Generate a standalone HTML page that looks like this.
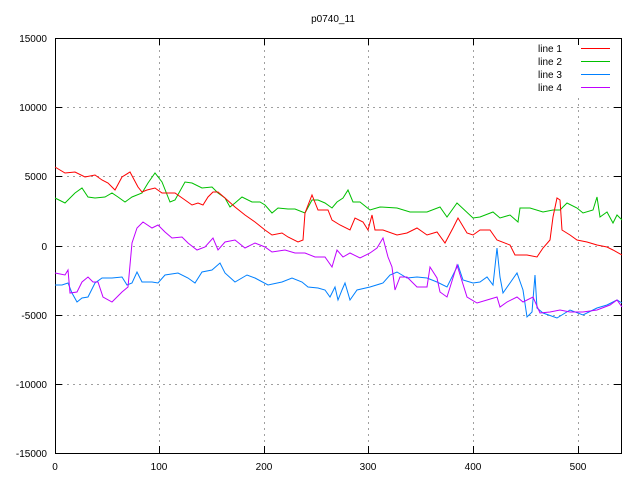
<!DOCTYPE html>
<html><head><style>body{margin:0;background:#fff}svg{display:block}text{font-family:"Liberation Sans",sans-serif;font-size:10px;fill:#000}</style></head><body>
<svg width="640" height="480" viewBox="0 0 640 480">
<g stroke="#a0a0a0" stroke-width="1" stroke-dasharray="2,4">
<line x1="159.5" y1="38" x2="159.5" y2="453"/><line x1="264.5" y1="38" x2="264.5" y2="453"/><line x1="368.5" y1="38" x2="368.5" y2="453"/><line x1="473.5" y1="38" x2="473.5" y2="453"/><line x1="578.5" y1="98" x2="578.5" y2="453"/>
<line x1="55" y1="107.5" x2="621" y2="107.5"/><line x1="55" y1="176.5" x2="621" y2="176.5"/><line x1="55" y1="246.5" x2="621" y2="246.5"/><line x1="55" y1="315.5" x2="621" y2="315.5"/><line x1="55" y1="384.5" x2="621" y2="384.5"/>
</g>
<rect x="55.5" y="38.5" width="566" height="415" fill="none" stroke="#000"/>
<g stroke="#000">
<path d="M55 107.5h7M55 176.5h7M55 246.5h7M55 315.5h7M55 384.5h7M621 107.5h-7M621 176.5h-7M621 246.5h-7M621 315.5h-7M621 384.5h-7M159.5 453v-7M264.5 453v-7M368.5 453v-7M473.5 453v-7M578.5 453v-7M159.5 38v7M264.5 38v7M368.5 38v7M473.5 38v7M578.5 38v7"/>
</g>
<g text-anchor="end">
<text x="47" y="42">15000</text><text x="47" y="111">10000</text><text x="47" y="180">5000</text><text x="47" y="250">0</text><text x="47" y="319">-5000</text><text x="47" y="388">-10000</text><text x="47" y="457">-15000</text>
</g>
<g text-anchor="middle">
<text x="55" y="470">0</text><text x="159" y="470">100</text><text x="264" y="470">200</text><text x="368" y="470">300</text><text x="473" y="470">400</text><text x="578" y="470">500</text>
<text x="333" y="22">p0740_11</text>
</g>
<g style="font-family:'Liberation Mono',monospace;font-size:11px">
<text x="538" y="52">line 1</text><text x="538" y="65">line 2</text><text x="538" y="78">line 3</text><text x="538" y="91">line 4</text>
</g>
<line x1="581" y1="48.5" x2="610" y2="48.5" stroke="#ff0000"/>
<line x1="581" y1="61.5" x2="610" y2="61.5" stroke="#00c000"/>
<line x1="581" y1="74.5" x2="610" y2="74.5" stroke="#0080ff"/>
<line x1="581" y1="87.5" x2="610" y2="87.5" stroke="#c000ff"/>
<g fill="none" stroke-width="1">
<polyline stroke="#00c000" points="55,198 65,203 75,193 82,188 88,197 95,198 105,197 112,193 118,197 125,202 132,197 142,193 148,183 155,173 162,182 170,202 175,200 185,182 192,183 202,188 212,187 218,193 225,198 230,207 235,203 242,197 252,202 260,202 265,205 272,213 278,208 288,209 295,209 305,213 312,200 318,200 325,203 332,208 337,202 343,198 348,190 353,202 360,202 370,210 380,207 397,208 410,212 427,212 440,207 447,217 457,203 473,218 480,217 493,212 500,218 510,215 518,222 520,208 530,208 543,212 553,210 560,210 567,203 577,208 583,213 593,210 597,197 600,217 607,212 613,223 617,215 622,220"/>
<polyline stroke="#ff0000" points="55,167 65,173 75,172 85,177 95,175 102,180 108,183 115,190 122,177 130,172 138,187 142,192 147,190 155,188 162,193 168,193 175,193 185,200 192,205 198,203 203,205 208,197 213,192 218,192 225,198 235,207 245,215 255,222 265,230 272,235 282,233 288,237 298,242 303,240 305,213 312,195 318,210 328,210 332,220 340,225 350,230 355,218 363,222 368,230 372,215 375,230 383,230 397,235 407,233 417,228 427,235 437,232 445,243 453,228 458,218 467,233 473,235 480,230 490,230 497,240 510,245 515,255 527,255 537,257 543,248 550,240 553,217 557,198 560,200 562,230 570,235 577,240 587,242 597,245 607,247 613,250 622,255"/>
<polyline stroke="#0080ff" points="55,285 62,285 68,283 72,293 77,302 82,298 88,297 95,283 102,278 112,278 122,277 127,285 132,283 137,272 142,282 152,282 158,283 165,275 178,273 188,278 195,283 202,272 212,270 220,263 225,273 235,282 247,275 255,278 268,285 282,282 292,278 302,282 308,287 318,288 325,290 330,297 335,287 338,300 342,290 345,283 350,300 357,290 370,287 383,283 390,275 397,272 407,278 417,277 427,278 437,282 447,287 458,265 463,280 473,283 480,282 487,277 493,285 497,248 500,277 503,293 510,283 517,273 523,290 527,317 532,312 535,275 537,308 543,313 557,318 570,310 583,315 597,308 607,305 617,300 622,303"/>
<polyline stroke="#c000ff" points="55,273 65,275 68,270 70,293 77,292 82,282 88,277 93,282 98,282 103,297 112,302 122,292 128,287 132,243 137,228 143,222 152,228 158,225 165,232 172,238 182,237 188,243 197,250 205,247 213,238 218,250 225,242 235,240 245,248 255,243 265,247 272,252 285,250 295,253 305,253 315,257 325,257 332,267 337,250 343,257 350,253 360,258 370,253 377,248 383,238 388,257 392,267 395,290 400,277 407,277 417,287 427,287 430,267 437,278 440,292 447,297 457,265 467,297 477,303 487,300 497,297 500,307 507,302 517,297 523,302 533,297 540,313 550,312 560,310 570,312 583,312 597,310 610,305 617,300 622,307"/>
</g>
</svg>
</body></html>
